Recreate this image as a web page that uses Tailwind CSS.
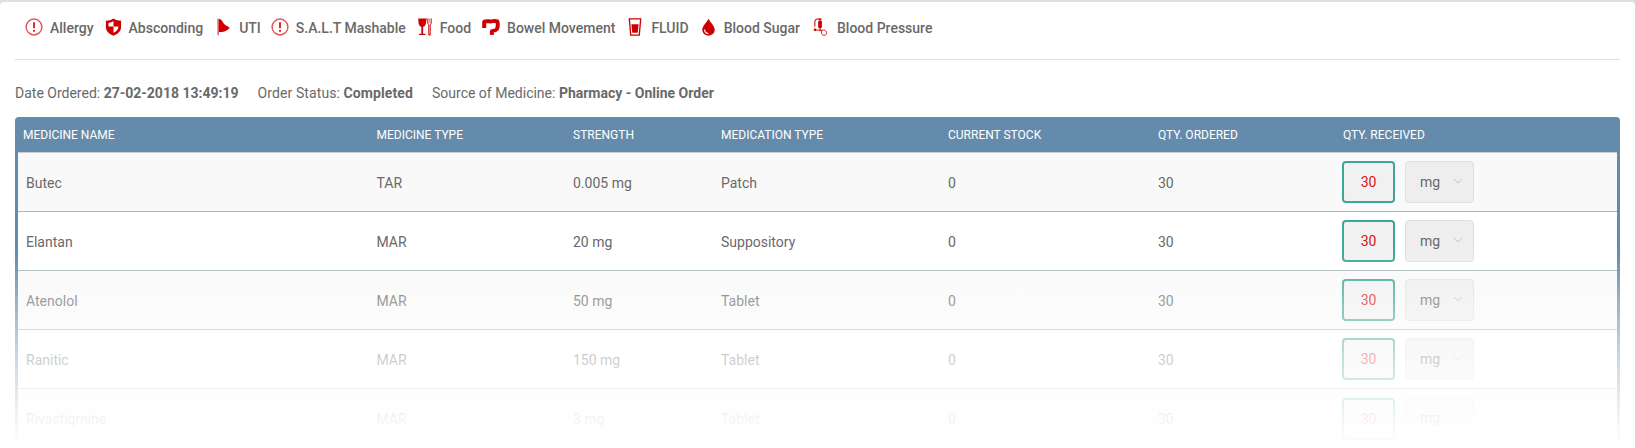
<!DOCTYPE html>
<html lang="en">
<head>
    <script src="https://cdn.jsdelivr.net/npm/@tailwindcss/browser@4"></script>
    <title>Medicine Order</title>
</head>
<body class="bg-white">

<div class="relative h-[448px] w-[1635px] overflow-hidden bg-[#e0e0e0] pt-[2px] font-['Roboto',sans-serif] text-[#696969]">
    <div class="h-full rounded-t-[4px] bg-white px-[15px]">

        <!-- legend -->
        <div class="flex h-[58px] items-center border-b border-[#dddddd] pb-[4px] text-[14px] font-medium">
            <div class="ml-[10px] flex items-center">
                <svg class="mr-[7px] -mt-[4px] h-[18px] w-[18px]" viewBox="0 0 20 20" fill="none"><circle cx="10" cy="10" r="8.8" stroke="#e25555" stroke-width="1.6"/><path d="M10 4.8v6.6" stroke="#d81313" stroke-width="2"/><circle cx="10" cy="14.3" r="1.2" fill="#d81313"/></svg>
                <span>Allergy</span>
            </div>
            <div class="ml-[11px] flex items-center">
                <svg class="mr-[7px] -mt-[4px] h-[18px] w-[17px]" viewBox="0 0 17 19"><path d="M8.5 0.5C6 2 3.500 2.800 0.500 3v6.500C0.500 14 4 17 8.500 18.800C13 17 16.500 14 16.500 9.500V3C13.500 2.800 11 2 8.500 0.500Z" fill="#cc0000"/><path d="M8.500 3.500v5.500H3.200V5.200C5.200 5 6.900 4.400 8.500 3.500ZM8.500 9H13.800C13.600 11.800 11.600 14.300 8.500 15.600Z" fill="#fff"/></svg>
                <span>Absconding</span>
            </div>
            <div class="ml-[14px] flex items-center">
                <svg class="mr-[9px] -mt-[4px] h-[18px] w-[13px]" viewBox="0 0 14 19"><path d="M0.500 0.500h1.500v18H0.500Z" fill="#e25555"/><path d="M2 0.500C5 0.800 6 4 7.500 6C9 7.800 11.500 8.800 13.800 10.500C11 13.500 7 15 2 15Z" fill="#cc0000"/></svg>
                <span>UTI</span>
            </div>
            <div class="ml-[10px] flex items-center">
                <svg class="mr-[7px] -mt-[4px] h-[18px] w-[18px]" viewBox="0 0 20 20" fill="none"><circle cx="10" cy="10" r="8.8" stroke="#e25555" stroke-width="1.6"/><path d="M10 4.8v6.6" stroke="#d81313" stroke-width="2"/><circle cx="10" cy="14.3" r="1.2" fill="#d81313"/></svg>
                <span>S.A.L.T Mashable</span>
            </div>
            <div class="ml-[11px] flex items-center">
                <svg class="mr-[8px] -mt-[4px] h-[18px] w-[15px]" viewBox="0 0 15 20"><path d="M0.500 0.500h9.500L9 6.500C8.600 8.800 7 9.800 6 10v7.500h2.500V19H1.500v-1.500H4V10C3 9.800 1.400 8.800 1 6.500Z" fill="#cc0000"/><path d="M11.200 0.500v5.200c0 1 .5 1.700 1.100 1.900V19h1.500V7.600c.6-.2 1.100-.9 1.100-1.900V0.500" fill="none" stroke="#cc0000" stroke-width="1.100"/><path d="M13 0.500v5" stroke="#e88" stroke-width="1"/></svg>
                <span>Food</span>
            </div>
            <div class="ml-[11px] flex items-center">
                <svg class="mr-[7px] -mt-[4px] h-[17px] w-[18px]" viewBox="0 0 18 17" fill="none"><path d="M2.200 10V3.800C4.500 2.600 5.800 3.400 8.500 3.400C11 3.400 12.500 2.200 15.300 3.400C16 6 15.800 9 15 11C14 12.500 12 12.800 10 13.200L9.800 16.800" stroke="#cc0000" stroke-width="4" stroke-linejoin="round"/></svg>
                <span>Bowel Movement</span>
            </div>
            <div class="ml-[13px] flex items-center">
                <svg class="mr-[9px] -mt-[4px] h-[18px] w-[14px]" viewBox="0 0 14 19"><path d="M1 1h12l-1.500 17H2.500Z" fill="none" stroke="#cc0000" stroke-width="1.400"/><path d="M3.200 6.500h7.600l-.9 9H4.100Z" fill="#cc0000"/></svg>
                <span>FLUID</span>
            </div>
            <div class="ml-[13px] flex items-center">
                <svg class="mr-[9px] -mt-[4px] h-[18px] w-[13px]" viewBox="0 0 13 18"><path d="M6.500 0.500C7.500 3.800 12.700 7.800 12.700 11.700C12.700 15 10 17.500 6.500 17.500C3 17.500 0.300 15 0.300 11.700C0.300 7.800 5.500 3.800 6.500 0.500Z" fill="#cc0000"/><path d="M2.600 11.500C2.600 13.800 4 15.300 6.300 15.500" fill="none" stroke="#fff" stroke-width="1.200"/></svg>
                <span>Blood Sugar</span>
            </div>
            <div class="ml-[13px] flex items-center">
                <svg class="mr-[9px] -mt-[4px] h-[18px] w-[15px]" viewBox="0 0 15 19" fill="none"><path d="M1.500 9V4.500C1.500 2 3 1 4.500 1H6.500" stroke="#d81313" stroke-width="1.200"/><rect x="5.500" y="0.500" width="3" height="2" fill="#cc0000"/><rect x="5" y="3" width="4" height="7.500" rx="1" fill="#cc0000"/><path d="M7 10.500v3.500" stroke="#cc0000" stroke-width="1.200"/><circle cx="1.800" cy="12.500" r="1.500" fill="#cc0000"/><path d="M3 12.800H10.500C12.500 12.800 14 14 14 15.600C14 17.200 12.800 18.300 11.300 18.300C9.800 18.300 8.700 17.200 8.700 15.800V13" stroke="#d81313" stroke-width="1"/></svg>
                <span>Blood Pressure</span>
            </div>
        </div>

        <!-- order info -->
        <div class="flex h-[57px] items-center gap-[19px] pt-[10px] text-[14px]">
            <div>Date Ordered: <b class="font-bold">27-02-2018 13:49:19</b></div>
            <div class="tracking-[0.1px]">Order Status: <b class="font-bold">Completed</b></div>
            <div>Source of Medicine: <b class="font-bold">Pharmacy - Online Order</b></div>
        </div>

        <!-- table -->
        <div class="w-[1605px]">
            <div class="grid h-[35px] grid-cols-[361.5px_196.5px_148px_227px_210px_185px_1fr] items-center rounded-t-[4px] bg-[#648bab] text-[12px] uppercase text-white">
                <div class="pl-[8px]">Medicine Name</div>
                <div>Medicine Type</div>
                <div>Strength</div>
                <div>Medication Type</div>
                <div>Current Stock</div>
                <div>Qty. Ordered</div>
                <div>Qty. Received</div>
            </div>
            <div class="border-x-[3px] border-x-[#648bab] text-[14px]">
                <div class="grid h-[60px] grid-cols-[358.5px_196.5px_148px_227px_210px_185px_1fr] items-center border-y border-t-[#c7cfd1] border-b-[#a9b9b9] bg-[#f9f9f9] pt-[2px]">
                    <div class="pl-[8px]">Butec</div><div>TAR</div><div>0.005 mg</div><div>Patch</div><div>0</div><div>30</div>
                    <div class="-ml-[1px] -mt-[2px] flex gap-[10px]">
                        <div class="flex h-[42px] w-[53px] items-center justify-center rounded-[4px] border-2 border-[#3fa796] bg-[#f1f1f1] pt-[1px] text-[#d81313]">30</div>
                        <div class="flex h-[42px] w-[69px] items-center justify-between rounded-[4px] border border-[#e0e0e0] bg-[#eeeeee] pl-[14px] pr-[10px]">mg<svg class="-mt-[3px] h-[6px] w-[10px]" viewBox="0 0 10 6" fill="none"><path d="M1 1l4 4 4-4" stroke="#c4c4c4"/></svg></div>
                    </div>
                </div>
                <div class="grid h-[59px] grid-cols-[358.5px_196.5px_148px_227px_210px_185px_1fr] items-center border-b border-b-[#a9b9b9] bg-white pt-[2px]">
                    <div class="pl-[8px]">Elantan</div><div>MAR</div><div>20 mg</div><div>Suppository</div><div>0</div><div>30</div>
                    <div class="-ml-[1px] -mt-[2px] flex gap-[10px]">
                        <div class="flex h-[42px] w-[53px] items-center justify-center rounded-[4px] border-2 border-[#3fa796] bg-[#f1f1f1] pt-[1px] text-[#d81313]">30</div>
                        <div class="flex h-[42px] w-[69px] items-center justify-between rounded-[4px] border border-[#e0e0e0] bg-[#eeeeee] pl-[14px] pr-[10px]">mg<svg class="-mt-[3px] h-[6px] w-[10px]" viewBox="0 0 10 6" fill="none"><path d="M1 1l4 4 4-4" stroke="#c4c4c4"/></svg></div>
                    </div>
                </div>
                <div class="grid h-[59px] grid-cols-[358.5px_196.5px_148px_227px_210px_185px_1fr] items-center border-b border-b-[#a9b9b9] bg-[#f9f9f9] pt-[2px]">
                    <div class="pl-[8px]">Atenolol</div><div>MAR</div><div>50 mg</div><div>Tablet</div><div>0</div><div>30</div>
                    <div class="-ml-[1px] -mt-[2px] flex gap-[10px]">
                        <div class="flex h-[42px] w-[53px] items-center justify-center rounded-[4px] border-2 border-[#3fa796] bg-[#f1f1f1] pt-[1px] text-[#d81313]">30</div>
                        <div class="flex h-[42px] w-[69px] items-center justify-between rounded-[4px] border border-[#e0e0e0] bg-[#eeeeee] pl-[14px] pr-[10px]">mg<svg class="-mt-[3px] h-[6px] w-[10px]" viewBox="0 0 10 6" fill="none"><path d="M1 1l4 4 4-4" stroke="#c4c4c4"/></svg></div>
                    </div>
                </div>
                <div class="grid h-[59px] grid-cols-[358.5px_196.5px_148px_227px_210px_185px_1fr] items-center border-b border-b-[#a9b9b9] bg-white pt-[2px]">
                    <div class="pl-[8px]">Ranitic</div><div>MAR</div><div>150 mg</div><div>Tablet</div><div>0</div><div>30</div>
                    <div class="-ml-[1px] -mt-[2px] flex gap-[10px]">
                        <div class="flex h-[42px] w-[53px] items-center justify-center rounded-[4px] border-2 border-[#3fa796] bg-[#f1f1f1] pt-[1px] text-[#d81313]">30</div>
                        <div class="flex h-[42px] w-[69px] items-center justify-between rounded-[4px] border border-[#e0e0e0] bg-[#eeeeee] pl-[14px] pr-[10px]">mg<svg class="-mt-[3px] h-[6px] w-[10px]" viewBox="0 0 10 6" fill="none"><path d="M1 1l4 4 4-4" stroke="#c4c4c4"/></svg></div>
                    </div>
                </div>
                <div class="grid h-[59px] grid-cols-[358.5px_196.5px_148px_227px_210px_185px_1fr] items-center bg-[#f9f9f9] pt-[2px]">
                    <div class="pl-[8px]">Rivastigmine</div><div>MAR</div><div>3 mg</div><div>Tablet</div><div>0</div><div>30</div>
                    <div class="-ml-[1px] -mt-[2px] flex gap-[10px]">
                        <div class="flex h-[42px] w-[53px] items-center justify-center rounded-[4px] border-2 border-[#3fa796] bg-[#f1f1f1] pt-[1px] text-[#d81313]">30</div>
                        <div class="flex h-[42px] w-[69px] items-center justify-between rounded-[4px] border border-[#e0e0e0] bg-[#eeeeee] pl-[14px] pr-[10px]">mg<svg class="-mt-[3px] h-[6px] w-[10px]" viewBox="0 0 10 6" fill="none"><path d="M1 1l4 4 4-4" stroke="#c4c4c4"/></svg></div>
                    </div>
                </div>
            </div>
        </div>
    </div>

    <!-- fade over the bottom of the table -->
    <div class="pointer-events-none absolute inset-x-0 bottom-0 h-[198px] bg-[linear-gradient(to_bottom,rgba(255,255,255,0)_0%,rgba(255,255,255,0.33)_25%,rgba(255,255,255,0.67)_55%,rgba(255,255,255,0.92)_86%,rgba(255,255,255,1)_100%)]"></div>
</div>

</body>
</html>
